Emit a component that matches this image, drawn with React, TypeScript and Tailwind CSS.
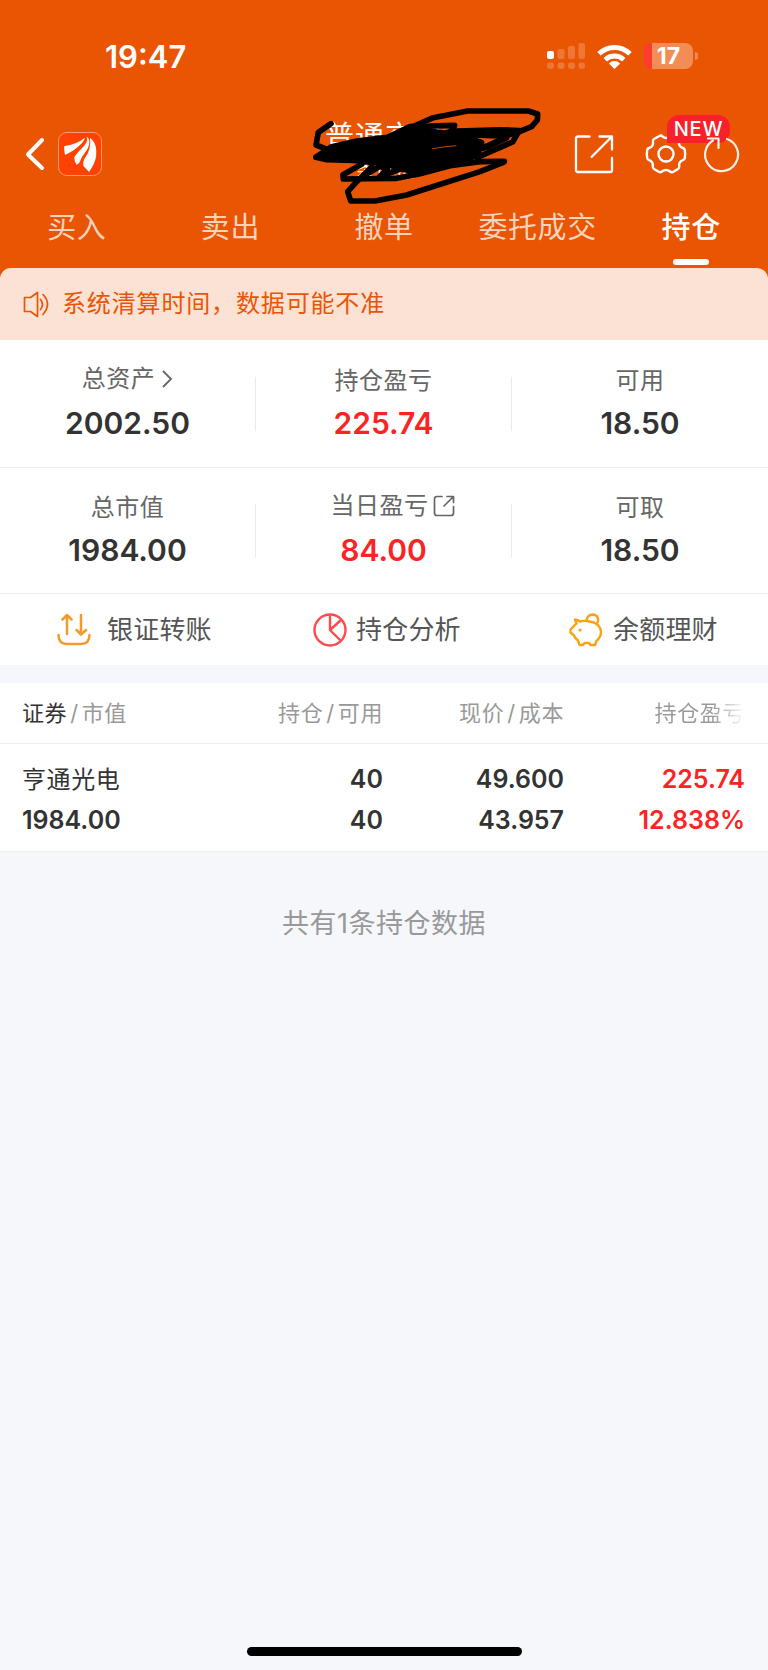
import { ReactNode } from 'react';
import clsx from 'clsx';

const TABS = ['买入', '卖出', '撤单', '委托成交', '持仓'];

function StatusBar() {
  return (
    <div className="flex h-[112px] items-center justify-between pl-[105px] pr-[70px] pb-0">
      <span className="text-[31px] font-semibold leading-none">19:47</span>
      <div className="flex items-center">
        <svg className="h-[26px] w-[38px]" viewBox="0 0 38 26" fill="currentColor">
          <rect x="0" y="8" width="7" height="8" rx="2" />
          <g opacity="0.2">
            <rect x="10.5" y="6" width="7" height="10" rx="2" />
            <rect x="21" y="3" width="7" height="13" rx="2" />
            <rect x="31.5" y="0" width="6.5" height="16" rx="2" />
            <rect x="0" y="19.5" width="7" height="6.5" rx="2.4" />
            <rect x="10.5" y="19.5" width="7" height="6.5" rx="2.4" />
            <rect x="21" y="19.5" width="7" height="6.5" rx="2.4" />
            <rect x="31.5" y="19.5" width="6.5" height="6.5" rx="2.4" />
          </g>
        </svg>
        <svg className="ml-3 h-[25px] w-[35px]" viewBox="0 0 35 25" fill="none" stroke="currentColor">
          <path d="M2 9.8 A22 22 0 0 1 33 9.8" strokeWidth="5" />
          <path d="M8.2 15.8 A13.3 13.3 0 0 1 26.8 15.8" strokeWidth="4.8" />
          <path d="M11.8 19.4 Q17.5 14.8 23.2 19.4 L17.5 25 Z" fill="currentColor" stroke="none" />
        </svg>
        <div className="ml-3 flex h-[26px] w-[49px] items-center justify-center overflow-hidden rounded-[8px] bg-[linear-gradient(to_right,#ff3b30_8px,#f28d55_8px)]">
          <span className="text-[23px] font-bold leading-none">17</span>
        </div>
        <div className="ml-[2px] h-2 w-[3px] rounded-r-full bg-[#f28d55]" />
      </div>
    </div>
  );
}

function Scribble() {
  return (
    <svg
      className="absolute left-[300px] top-[95px] h-[115px] w-[260px]"
      viewBox="0 0 780 345"
      fill="none"
      stroke="#000"
      strokeWidth="17"
      strokeLinecap="round"
      strokeLinejoin="round"
    >
      <path d="M93 86 L55 112 L48 150 L82 163 L104 156" />
      <path d="M300 112 L400 68 L503 48 L685 48 L713 57 L712 75 L695 95 L655 111 L638 141 L580 166 L530 188" />
      <path d="M48 186 L95 155 L170 138 L262 127 L330 95 L464 91 L458 106 L400 130" />
      <path d="M420 122 L470 110 L600 106 L658 108 L612 122 L470 116" strokeWidth="20" />
      <path d="M618 128 L560 155 L480 178 L440 196" strokeWidth="20" />
      <path d="M430 165 L485 148 L545 142 L520 134 L440 132" />
      <path d="M613 199 L540 200 L450 212 L360 236 L290 250 L130 252 L129 239 L185 208" />
      <path d="M610 202 L540 230 L320 300 L225 318 L152 318 L143 290 L170 260 L215 216" />
      <path d="M195 240 L240 214 L262 222 L238 246 L300 222 L340 228" />
      <path
        d="M48 187 L90 160 L180 140 L270 128 L335 100 L440 116 L460 126 L540 142 L540 160 L530 180 L500 194 L440 208 L365 224 L330 226 L250 206 L160 196 L80 194 Z"
        fill="#000"
      />
      <path d="M398 161 L430 156 L468 152" stroke="#ea5504" strokeWidth="2.5" />
    </svg>
  );
}

function NavBar() {
  return (
    <div className="flex h-[84px] items-center">
      <svg className="ml-[25px] h-[34px] w-[20px]" viewBox="0 0 20 34" fill="none" stroke="currentColor" strokeWidth="4" strokeLinecap="round" strokeLinejoin="round">
        <path d="M17 3 L3 17.5 L17 31" />
      </svg>
      <div className="ml-[13px] mt-[-14px] flex size-[44px] translate-y-[7px] items-center justify-center rounded-[9px] border border-[#f99a72] bg-[#ff4200]">
        <svg className="size-[42px]" viewBox="0 0 126 126" fill="#fff">
          <path d="M16 39 Q53 34 78 14 Q76 22 69 30 Q49 52 18 66 Q14 52 16 39 Z" />
          <path d="M82 11 Q86 14 84 24 Q80 36 64 50 Q54 60 46 72 Q45 84 53 96 L61 89 Q67 72 77 60 Q92 42 91 23 Q89 13 82 11 Z" />
          <path d="M93 14 Q106 24 110 40 Q116 70 104 93 Q98 107 90 117 Q80 106 73 99 Q71 86 77 76 Q98 48 93 14 Z" />
        </svg>
      </div>
      <div className="ml-[222px] mt-[-7px] w-[122px] text-center">
        <div className="text-[29px] leading-[38px] tracking-[1px]">普通交易</div>
        <div className="text-[20px] leading-[28px]">条行资</div>
      </div>
      <svg className="ml-[127px] size-[42px]" viewBox="0 0 42 42" fill="none" stroke="currentColor" strokeWidth="2.3" strokeLinecap="round" strokeLinejoin="round">
        <path d="M16.500 3.500 H5 Q3 3.500 3 5.500 V37 Q3 39 5 39 H37 Q39 39 39 37 V25" />
        <path d="M26.500 3.500 H39 V16.500 M38.500 4 L18.500 24" />
      </svg>
      <div className="relative ml-[30px] size-[42px]">
        <svg className="size-[42px]" viewBox="0 0 42 42" fill="none" stroke="currentColor" strokeWidth="2.4" strokeLinejoin="round">
          <path d="M14.500 3 Q16 2 17.500 3.500 Q21 6.500 24.500 3.500 Q26 2 27.500 3 L33 6 Q34.500 7 34 9 Q33.300 13.500 38 15 Q39.500 15.500 39.800 17 Q40.500 21 39.800 25 Q39.500 26.500 38 27 Q33.500 29 34.200 33 Q34.500 35 33 36 L28 39 Q26.500 39.800 25 38.500 Q21 35.500 17 38.500 Q15.500 39.800 14 39 L9 36 Q7.500 35 7.800 33 Q8.500 29 4 27 Q2.500 26.500 2.200 25 Q1.500 21 2.200 17 Q2.500 15.500 4 15 Q8.700 13.500 8 9 Q7.500 7 9 6 Z" />
          <circle cx="21" cy="21" r="7.500" />
        </svg>
        <div className="absolute left-[22px] top-[-18px] flex h-[28px] w-[63px] items-center justify-center rounded-[12px] rounded-bl-none bg-[#f6212b] text-[20px] font-medium tracking-[0.8px]">
          NEW
        </div>
      </div>
      <svg className="relative ml-[16px] size-[38px]" viewBox="0 0 38 38" fill="none" stroke="#fff1e8" strokeWidth="2.200" strokeLinecap="round" strokeLinejoin="round">
        <path d="M24 4 A16.500 16.500 0 1 1 10 5.500" />
        <path d="M5 3.500 H15.500 V13" />
      </svg>
    </div>
  );
}

function Tabs() {
  return (
    <div className="grid h-[72px] grid-cols-5">
      {TABS.map((tab) => {
        const active = tab === '持仓';
        return (
          <div key={tab} className="flex flex-col items-center pt-[12px]">
            <span
              className={clsx(
                'text-[29px] leading-[40px] tracking-[0.6px]',
                active ? 'font-medium text-white' : 'text-[#fbd3bd]'
              )}
            >
              {tab}
            </span>
            {active && <div className="mt-[11px] h-[6px] w-[36px] rounded-full bg-white" />}
          </div>
        );
      })}
    </div>
  );
}

function Notice() {
  return (
    <div className="flex h-[72px] items-center rounded-t-[11px] bg-[#fce1d5] pl-[23px] text-[#ea5504]">
      <svg className="h-[27px] w-[27px]" viewBox="0 0 27 27" fill="none" stroke="currentColor" strokeWidth="1.700" strokeLinejoin="round" strokeLinecap="round">
        <path d="M1.500 6.500 H7.500 L14.500 1.500 V25.500 L7.500 20.500 H1.500 Z" />
        <path d="M17.500 8.500 Q21.500 13.500 17.500 18.500 M20 3.500 Q29 13 20 23.500" />
      </svg>
      <span className="ml-[12px] text-[24px] leading-none tracking-[0.85px]">系统清算时间，数据可能不准</span>
    </div>
  );
}

interface StatProps {
  label: string;
  value: string;
  icon?: ReactNode;
  red?: boolean;
  divider?: boolean;
  labelClass?: string;
}

function Stat({ label, value, icon, red, divider = true, labelClass }: StatProps) {
  return (
    <div className="flex h-full items-center">
      <div className="flex flex-1 flex-col items-center">
        <div className={clsx('flex h-[32px] items-center text-[24px] tracking-[0.5px] text-[#666]', labelClass)}>
          {label}
          {icon}
        </div>
        <div className={clsx('mt-[6px] text-[30px] font-semibold leading-[40px]', red ? 'text-[#fb2424]' : 'text-[#333]')}>
          {value}
        </div>
      </div>
      {divider && <div className="h-[54px] w-px bg-[#ebebeb]" />}
    </div>
  );
}

function Summary() {
  return (
    <div className="bg-white">
      <div className="grid h-[128px] grid-cols-3 border-b border-[#ebebeb]">
        <Stat
          label="总资产"
          value="2002.50"
          labelClass="relative top-[-2px]"
          icon={
            <svg className="ml-[6px] h-[18px] w-[12px]" viewBox="0 0 12 18" fill="none" stroke="currentColor" strokeWidth="1.800">
              <path d="M2 1 L10 9 L2 17" />
            </svg>
          }
        />
        <Stat label="持仓盈亏" value="225.74" red />
        <Stat label="可用" value="18.50" divider={false} />
      </div>
      <div className="grid h-[126px] grid-cols-3 border-b border-[#ebebeb]">
        <Stat label="总市值" value="1984.00" />
        <Stat
          label="当日盈亏"
          value="84.00"
          labelClass="relative left-[9px] top-[-2px]"
          red
          icon={
            <svg className="ml-[4px] size-[22px]" viewBox="0 0 22 22" fill="none" stroke="currentColor" strokeWidth="1.700" strokeLinecap="round" strokeLinejoin="round">
              <path d="M9 1.500 H4 Q1.500 1.500 1.500 4 V18 Q1.500 20.500 4 20.500 H18 Q20.500 20.500 20.500 18 V11.500" />
              <path d="M14 1.500 H20.500 V7.500 M20 2 L11 11" />
            </svg>
          }
        />
        <Stat label="可取" value="18.50" divider={false} />
      </div>
    </div>
  );
}

function Actions() {
  return (
    <div className="flex h-[71px] items-center bg-white text-[26px] leading-none tracking-[0.2px] text-[#555]">
      <div className="flex w-[256px] items-center pl-[57px]">
        <svg className="size-[34px]" viewBox="0 0 34 34" fill="none" stroke="#f39a2b" strokeWidth="2.500" strokeLinecap="round" strokeLinejoin="round">
          <path d="M1.500 22 Q1.500 31 10 31 H24 Q32.500 31 32.500 22" />
          <path d="M10 21 V2 M5.500 6.500 L10 2 L14.500 6.500" />
          <path d="M24 2 V21 M19.500 17 L24 21.500 L29 17" />
        </svg>
        <span className="ml-[16px]">银证转账</span>
      </div>
      <div className="flex w-[256px] items-center pl-[57px]">
        <svg className="size-[34px]" viewBox="0 0 34 34" fill="none" stroke="#ff4b4f" strokeWidth="2.400">
          <circle cx="17" cy="17" r="15.500" />
          <path d="M17 1.500 V17 L28 28 M17 17 L28 7" />
        </svg>
        <span className="ml-[9px]">持仓分析</span>
      </div>
      <div className="flex w-[256px] items-center pl-[57px]">
        <svg className="size-[34px]" viewBox="0 0 34 34" fill="none" stroke="#f8a313" strokeWidth="2.400" strokeLinejoin="round" strokeLinecap="round">
          <path d="M6 6.500 Q9 7 11 8.500 Q14 7.500 18 8 L25 9.500 Q32 13 32 19 Q32 24 27.500 28 L26 32 H21.500 L20 30 H15.500 L14 32 H10.500 L9 27.500 Q6 25.500 5 22.500 L1.500 19.500 V16.500 L5 13 Q6 11.500 7.500 10.500 Z" />
          <path d="M17.500 7.500 Q18.500 1.500 24 1.500 Q29.500 2 29 8 Q28.500 10 27.500 11" />
          <circle cx="11" cy="17" r="0.800" fill="#f8a313" strokeWidth="1.600" />
        </svg>
        <span className="ml-[10px]">余额理财</span>
      </div>
    </div>
  );
}

function Holdings() {
  return (
    <div className="mt-[18px] bg-white">
      <div className="grid h-[61px] grid-cols-[181px_180px_181px_181px] items-center border-b border-[#efefef] pl-[22px] text-right text-[22px] tracking-[0.6px] text-[#999]">
        <div className="text-left">
          <span className="text-[#333]">证券</span>
          <span className="mx-[3px]">/</span>市值
        </div>
        <div>
          持仓<span className="mx-[3px]">/</span>可用
        </div>
        <div>
          现价<span className="mx-[3px]">/</span>成本
        </div>
        <div className="bg-gradient-to-r from-[#999] from-82% to-transparent bg-clip-text text-transparent">持仓盈亏</div>
      </div>
      <div className="grid h-[108px] grid-cols-[181px_180px_181px_181px] border-b border-[#eeeff1] pl-[22px] pt-[15px] text-right text-[25px] font-semibold leading-[41px] text-[#333]">
        <div className="text-left">
          <div className="text-[24px] font-normal tracking-[0.6px]">亨通光电</div>
          <div>1984.00</div>
        </div>
        <div>
          <div>40</div>
          <div>40</div>
        </div>
        <div>
          <div>49.600</div>
          <div>43.957</div>
        </div>
        <div className="text-[#fb2424]">
          <div>225.74</div>
          <div>12.838%</div>
        </div>
      </div>
    </div>
  );
}

export default function App() {
  return (
    <div className="relative flex h-[1670px] w-[768px] flex-col overflow-hidden bg-[#f6f7fa] font-['Inter','Noto_Sans_CJK_SC',sans-serif]">
      <div className="bg-[#ea5504] text-white">
        <StatusBar />
        <NavBar />
        <Tabs />
        <Notice />
      </div>
      <Summary />
      <Actions />
      <Holdings />
      <div className="mt-[52px] text-center text-[27px] leading-[40px] tracking-[0.5px] text-[#999]">共有1条持仓数据</div>
      <div className="mx-auto mb-[14px] mt-auto h-[9px] w-[275px] rounded-full bg-black" />
      <Scribble />
    </div>
  );
}
